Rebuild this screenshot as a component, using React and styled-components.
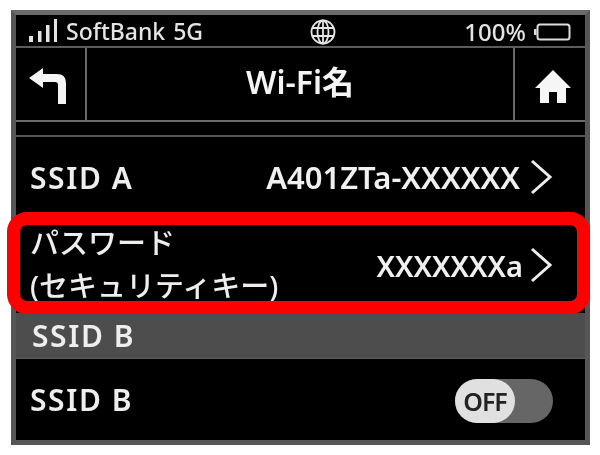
import styled, { createGlobalStyle } from "styled-components";

const GlobalStyle = createGlobalStyle`
  html, body {
    margin: 0;
    padding: 0;
    background: #fff;
  }
  body {
    font-family: "Noto Sans", "Noto Sans CJK JP", sans-serif;
  }
`;

const Page = styled.div`
  width: 600px;
  height: 455px;
  padding: 10px 10px 0 11px;
  box-sizing: border-box;
  overflow: hidden;
`;

const Device = styled.div`
  position: relative;
  width: 579px;
  height: 435px;
  box-sizing: border-box;
  border: 5px solid #565656;
  border-top-color: #6a6a6a;
  background: #000;
  color: #f2f2f2;
`;

const Screen = styled.div`
  display: flex;
  flex-direction: column;
  height: 100%;
  filter: blur(0.7px);
`;

const StatusBar = styled.div`
  display: grid;
  grid-template-columns: 1fr 1fr 1fr;
  align-items: center;
  height: 33px;
  padding: 0 14px 0 13px;
  box-sizing: border-box;
  border-bottom: 2px solid #5c5c5c;
`;

const Carrier = styled.div`
  display: flex;
  align-items: center;
  gap: 7px;
  font-size: 23px;
  font-weight: 500;
  color: #e4e4e4;
  white-space: nowrap;
  position: relative;
  top: -1px;
`;

const CarrierName = styled.span`
  word-spacing: 2px;
`;

const Globe = styled.div`
  display: flex;
  justify-content: center;
  padding-left: 46px;
`;

const Battery = styled.div`
  display: flex;
  justify-content: flex-end;
  align-items: center;
  gap: 8px;
  font-size: 24px;
  font-weight: 500;
  color: #e4e4e4;
`;

const Header = styled.div`
  display: flex;
  align-items: stretch;
  height: 74px;
  box-sizing: border-box;
  border-bottom: 2px solid #6a6a6a;
`;

const HeaderButton = styled.div`
  display: flex;
  align-items: center;
  justify-content: center;
  width: ${(p) => p.$width}px;
  flex: none;
  box-sizing: border-box;
  padding: ${(p) => p.$padding};
  ${(p) => (p.$left ? "border-right" : "border-left")}: 2px solid #6a6a6a;
`;

const Title = styled.div`
  flex: 1;
  text-align: center;
  font-size: 32px;
  font-weight: 600;
  line-height: 68px;
  color: #f4f4f4;
`;

const Strip = styled.div`
  height: 15px;
  box-sizing: border-box;
  border-bottom: 2px solid #555;
`;

const Row = styled.div`
  display: flex;
  align-items: center;
  justify-content: space-between;
  height: ${(p) => p.$height}px;
  flex: none;
  box-sizing: border-box;
  padding: 0 32px 0 14px;
`;

const Label = styled.div`
  font-size: 30px;
  font-weight: 600;
  letter-spacing: 1.6px;
  color: #eeeeee;
`;

const PasswordLabel = styled.div`
  font-size: 29px;
  font-weight: 500;
  line-height: 43px;
  color: #eeeeee;
  white-space: nowrap;
  position: relative;
  top: -1px;
`;

const Value = styled.div`
  display: flex;
  align-items: center;
  gap: ${(p) => p.$gap}px;
  font-size: ${(p) => p.$size}px;
  font-weight: 600;
  color: #f0f0f0;
  white-space: nowrap;
`;

const SectionBar = styled.div`
  display: flex;
  align-items: center;
  height: 46px;
  flex: none;
  box-sizing: border-box;
  padding-left: 16px;
  background: #4d4d4d;
  border-bottom: 1px solid #5e5e5e;
`;

const Toggle = styled.div`
  position: relative;
  top: 1px;
  width: 98px;
  height: 44px;
  border-radius: 22px;
  background: #666;
`;

const Knob = styled.div`
  display: flex;
  align-items: center;
  justify-content: center;
  width: 60px;
  height: 44px;
  border-radius: 22px;
  background: #e0e0e0;
  color: #222;
  font-size: 25px;
  font-weight: 600;
  letter-spacing: -1px;
`;

const Highlight = styled.div`
  position: absolute;
  left: -9px;
  right: -5px;
  top: 197px;
  height: 102px;
  box-sizing: border-box;
  border: 13px solid #ff0000;
  border-radius: 20px;
  pointer-events: none;
`;

const Chevron = () => (
  <svg width="24" height="36" viewBox="0 0 24 36" fill="none">
    <path d="M3 2 L21 18 L3 34" stroke="#eee" strokeWidth="3" />
  </svg>
);

const Signal = () => (
  <svg width="30" height="26" viewBox="0 0 30 26" fill="#e4e4e4">
    <rect x="0" y="18" width="4" height="6" />
    <rect x="9" y="13" width="3.5" height="11" />
    <rect x="17" y="7" width="3.5" height="17" />
    <rect x="25" y="1" width="3" height="23" />
  </svg>
);

const GlobeIcon = () => (
  <svg width="28" height="26" viewBox="0 0 26 26" fill="none" stroke="#e4e4e4" strokeWidth="1.8">
    <circle cx="13" cy="13" r="11.5" />
    <ellipse cx="13" cy="13" rx="5.5" ry="11.5" />
    <path d="M13 1.5 V24.5 M2 9 H24 M2 17 H24" />
  </svg>
);

const BatteryIcon = () => (
  <svg width="37" height="18" viewBox="0 0 37 18" fill="none">
    <rect x="0" y="6" width="2.5" height="6" fill="#ddd" />
    <rect x="3.5" y="1.5" width="32" height="15" rx="2.5" stroke="#ddd" strokeWidth="2" />
    <rect x="6" y="4" width="27" height="10" fill="#000" />
  </svg>
);

const BackIcon = () => (
  <svg width="38" height="38" viewBox="0 0 38 38" fill="none">
    <path d="M0 10 L14 0 L14 6 L28 6 Q37 6 37 15 L37 36 L29 36 L29 17 Q29 14 26 14 L14 14 L14 20 Z" fill="#f4f4f4" />
  </svg>
);

const HomeIcon = () => (
  <svg width="36" height="33" viewBox="0 0 36 33" fill="#f6f6f6">
    <path d="M18 0 L36 18 L31 18 L31 33 L22 33 L22 22 L14 22 L14 33 L5 33 L5 18 L0 18 Z" />
  </svg>
);

export default function App() {
  return (
    <Page>
      <GlobalStyle />
      <Device>
        <Screen>
          <StatusBar>
            <Carrier>
              <Signal />
              <CarrierName>SoftBank 5G</CarrierName>
            </Carrier>
            <Globe>
              <GlobeIcon />
            </Globe>
            <Battery>
              <span>100%</span>
              <BatteryIcon />
            </Battery>
          </StatusBar>
          <Header>
            <HeaderButton $width={71} $left $padding="5px 6px 0 0">
              <BackIcon />
            </HeaderButton>
            <Title>Wi-Fi名</Title>
            <HeaderButton $width={72} $padding="4px 0 0 6px">
              <HomeIcon />
            </HeaderButton>
          </Header>
          <Strip />
          <Row $height={80}>
            <Label>SSID A</Label>
            <Value $size={31} $gap={9}>
              A401ZTa-XXXXXX
              <Chevron />
            </Value>
          </Row>
          <Row $height={96}>
            <PasswordLabel>
              パスワード
              <br />
              (セキュリティキー)
            </PasswordLabel>
            <Value $size={29} $gap={6}>
              XXXXXXXa
              <Chevron />
            </Value>
          </Row>
          <SectionBar>
            <Label>SSID B</Label>
          </SectionBar>
          <Row $height={81}>
            <Label>SSID B</Label>
            <Toggle>
              <Knob>OFF</Knob>
            </Toggle>
          </Row>
        </Screen>
        <Highlight />
      </Device>
    </Page>
  );
}
